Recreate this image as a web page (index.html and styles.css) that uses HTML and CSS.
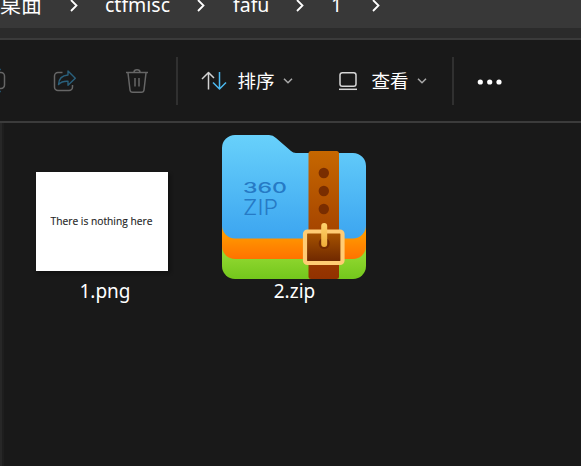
FILE: index.html
```html
<!DOCTYPE html>
<html lang="zh-CN">
<head>
<meta charset="utf-8">
<title>1</title>
<link rel="stylesheet" href="styles.css">
</head>
<body>
<div class="window">
  <nav class="address">
    <span class="crumb desktop">桌面</span>
    <svg class="sep" viewBox="0 0 8 12"><path d="M1 0l5.5 5.500L1 11"/></svg>
    <span class="crumb ctf">ctfmisc</span>
    <svg class="sep" viewBox="0 0 8 12"><path d="M1 0l5.500 5.500L1 11"/></svg>
    <span class="crumb fafu">fafu</span>
    <svg class="sep" viewBox="0 0 8 12"><path d="M1 0l5.500 5.500L1 11"/></svg>
    <span class="crumb one">1</span>
    <svg class="sep" viewBox="0 0 8 12"><path d="M1 0l5.500 5.500L1 11"/></svg>
  </nav>
  <div class="band"></div>
  <div class="toolbar">
    <svg class="rename" viewBox="0 0 6 28"><path d="M-8 5.500H1a3.500 3.500 0 0 1 3.500 3.500v9a3.500 3.500 0 0 1-3.500 3.500H-8" stroke="#666"/><path d="M-1 2.500H1M-1 24.500H1" stroke="#22506a"/></svg>
    <svg class="share" viewBox="0 0 24 28"><path d="M9.500 5.500H5A3.500 3.500 0 0 0 1.500 9v11A3.500 3.500 0 0 0 5 23.500h11a3.500 3.500 0 0 0 3.500-3.500v-2" stroke="#666"/><path d="M15 4l7.300 7.200L15 18.300v-4c-4.500-.3-7 .6-9.500 3.200C5.800 12 9 8.400 15 8z" stroke="#2a607c" stroke-width="1.400"/></svg>
    <svg class="trash" viewBox="0 0 24 28"><path d="M1 5.500h22M9 5c0-3 6-3 6 0M3 6l2 17q.3 2.300 2.600 2.300h8.800q2.300 0 2.600-2.300L21 6M10 11v8.500M14 11v8.500" stroke="#666"/></svg>
    <i class="divider"></i>
    <svg class="sort" viewBox="0 0 26 20"><path d="M7.500 18.500V1.500M1 8l6.500-6.500L13 7" stroke="#d2d2d2"/><path d="M18.500 1v17M12 11.500l6.500 6.500 6.500-6.500" stroke="#4cb9f0"/></svg>
    <span class="label">排序</span>
    <svg class="caret" viewBox="0 0 10 6"><path d="M1 .8l4 4 4-4"/></svg>
    <svg class="view" viewBox="0 0 20 20"><rect x="2" y="1.700" width="16" height="13.600" rx="2.300"/><path d="M1 18.300h18"/></svg>
    <span class="label">查看</span>
    <svg class="caret" viewBox="0 0 10 6"><path d="M1 .8l4 4 4-4"/></svg>
    <i class="divider second"></i>
    <svg class="more" viewBox="0 0 26 6"><circle cx="3.300" cy="3" r="2.600"/><circle cx="12.700" cy="3" r="2.600"/><circle cx="22" cy="3" r="2.600"/></svg>
  </div>
  <main class="files">
    <figure class="file image">
      <div class="thumb"><svg viewBox="0 0 132 99"><text x="14.500" y="53" textLength="102" lengthAdjust="spacingAndGlyphs">There is nothing here</text></svg></div>
      <figcaption>1.png</figcaption>
    </figure>
    <figure class="file zip">
      <svg class="archive" viewBox="0 0 144 144">
        <defs>
          <linearGradient id="blue" x2="0" y2="1"><stop stop-color="#68d1fb"/><stop offset="1" stop-color="#3ca5f0"/></linearGradient>
          <linearGradient id="orange" gradientUnits="userSpaceOnUse" x1="0" y1="98" x2="0" y2="124"><stop stop-color="#ff9b00"/><stop offset="1" stop-color="#ff7200"/></linearGradient>
          <linearGradient id="green" gradientUnits="userSpaceOnUse" x1="0" y1="120" x2="0" y2="144"><stop stop-color="#91d730"/><stop offset="1" stop-color="#73c71c"/></linearGradient>
          <linearGradient id="strap" x2="0" y2="1"><stop stop-color="#c66700"/><stop offset="1" stop-color="#923100"/></linearGradient>
          <linearGradient id="buckle" x2="0" y2="1"><stop stop-color="#a95500"/><stop offset="1" stop-color="#6c2600"/></linearGradient>
          <linearGradient id="pin" x2="0" y2="1"><stop stop-color="#ffd36e"/><stop offset="1" stop-color="#efad38"/></linearGradient>
        </defs>
        <path fill="url(#green)" d="M0 90H144V131a13 13 0 0 1-13 13H13A13 13 0 0 1 0 131z"/>
        <path fill="url(#orange)" d="M0 85H144V111a13 13 0 0 1-13 13H13A13 13 0 0 1 0 111z"/>
        <path fill="url(#blue)" d="M13 0H47q4 0 7 3L69 16q2 2 5 2h57a13 13 0 0 1 13 13V90a13 13 0 0 1-13 13.500H13A13 13 0 0 1 0 90V13A13 13 0 0 1 13 0z"/>
        <rect x="86.500" y="16" width="30.500" height="128" rx="2.500" fill="url(#strap)"/>
        <g fill="#792d00"><circle cx="101.800" cy="38" r="5.200"/><circle cx="101.800" cy="56" r="5.200"/><circle cx="101.800" cy="74" r="5.200"/></g>
        <g class="brand"><text class="number" x="21" y="58.300" textLength="44" lengthAdjust="spacingAndGlyphs">360</text><text class="word" x="21" y="80" textLength="35" lengthAdjust="spacingAndGlyphs">ZIP</text></g>
        <rect x="83" y="96.500" width="37.500" height="31.500" rx="2.500" fill="url(#buckle)" stroke="#ffcc74" stroke-width="4.200"/>
        <circle cx="102.200" cy="108.500" r="5.500" fill="#752b00"/>
        <rect x="99.200" y="88" width="6" height="24" rx="3" fill="url(#pin)"/>
      </svg>
      <figcaption>2.zip</figcaption>
    </figure>
  </main>
</div>
</body>
</html>
```
FILE: styles.css
```css
* { box-sizing: border-box; }
body { margin: 0; background: #191919; }
.window {
  width: 581px;
  height: 466px;
  overflow: hidden;
  display: flex;
  flex-direction: column;
  color: #fff;
  font-family: "Noto Sans", "Noto Sans CJK SC", sans-serif;
}
svg { display: block; flex: none; fill: none; overflow: visible; }
.address {
  height: 28px;
  flex: none;
  display: flex;
  align-items: flex-start;
  overflow: hidden;
  background: #383838;
}
.crumb {
  flex: none;
  margin-top: -9px;
  height: 28px;
  line-height: 28px;
  font-size: 19.5px;
  white-space: nowrap;
}
.desktop { width: 70px; font-size: 21px; margin-top: -10px; }
.ctf { width: 92px; margin-left: 27px; }
.fafu { width: 63px; margin-left: 28px; }
.one { width: 41px; margin-left: 27px; }
.sep { width: 8px; height: 12px; margin-left: -0.5px; margin-right: 0.5px; stroke: #fff; stroke-width: 1.8; }
.band {
  height: 12px;
  flex: none;
  background: #2b2b2b;
  border-bottom: 2px solid #3b3b3b;
}
.toolbar {
  height: 83px;
  flex: none;
  display: flex;
  align-items: center;
  border-bottom: 2px solid #3b3b3b;
}
.toolbar svg { stroke-width: 1.5; stroke-linejoin: round; }
.rename { width: 6px; height: 28px; }
.share { width: 24px; height: 28px; margin-left: 47px; }
.trash { width: 24px; height: 28px; margin-left: 48px; }
.divider { flex: none; width: 2px; height: 48px; background: #303030; margin-left: 27px; }
.sort { width: 26px; height: 20px; margin-left: 23px; }
.label { flex: none; width: 37px; margin-left: 10.5px; font-size: 18.5px; line-height: 28px; white-space: nowrap; position: relative; top: 0.5px; }
.caret { width: 10px; height: 6px; margin-left: 8.5px; stroke: #aaa; }
.view { width: 20px; height: 20px; margin-left: 45px; stroke: #d6d6d6; }
.view + .label { margin-left: 13.5px; }
.divider.second { margin-left: 25px; }
.more { width: 26px; height: 6px; margin-left: 23px; margin-top: 2px; fill: #fff; }
.files {
  flex: 1;
  display: flex;
  align-items: flex-start;
  border-left: 2px solid #272727;
  box-shadow: inset 2px 0 #1e1e1e;
}
.file { margin: 0; display: flex; flex-direction: column; align-items: center; }
.image { width: 132px; margin: 49px 0 0 34px; }
.zip { width: 144px; margin: 12px 0 0 54px; }
.thumb {
  width: 132px;
  height: 99px;
  background: #fff;
  box-shadow: 2px 2px 3px #101010;
}
.thumb text { fill: #222; stroke: #222; stroke-width: .15; font: 11.5px "Open Sans", "Noto Sans", sans-serif; }
.archive { width: 144px; height: 144px; }
figcaption { height: 26px; line-height: 26px; font-size: 19px; margin-left: 1px; margin-top: -1px; }
.image figcaption { margin-left: 6px; margin-top: 7px; }
.brand { fill: #267ac5; }
.number { font: 500 14.5px Inter, sans-serif; }
.word { font: 300 22px Inter, sans-serif; }
```
